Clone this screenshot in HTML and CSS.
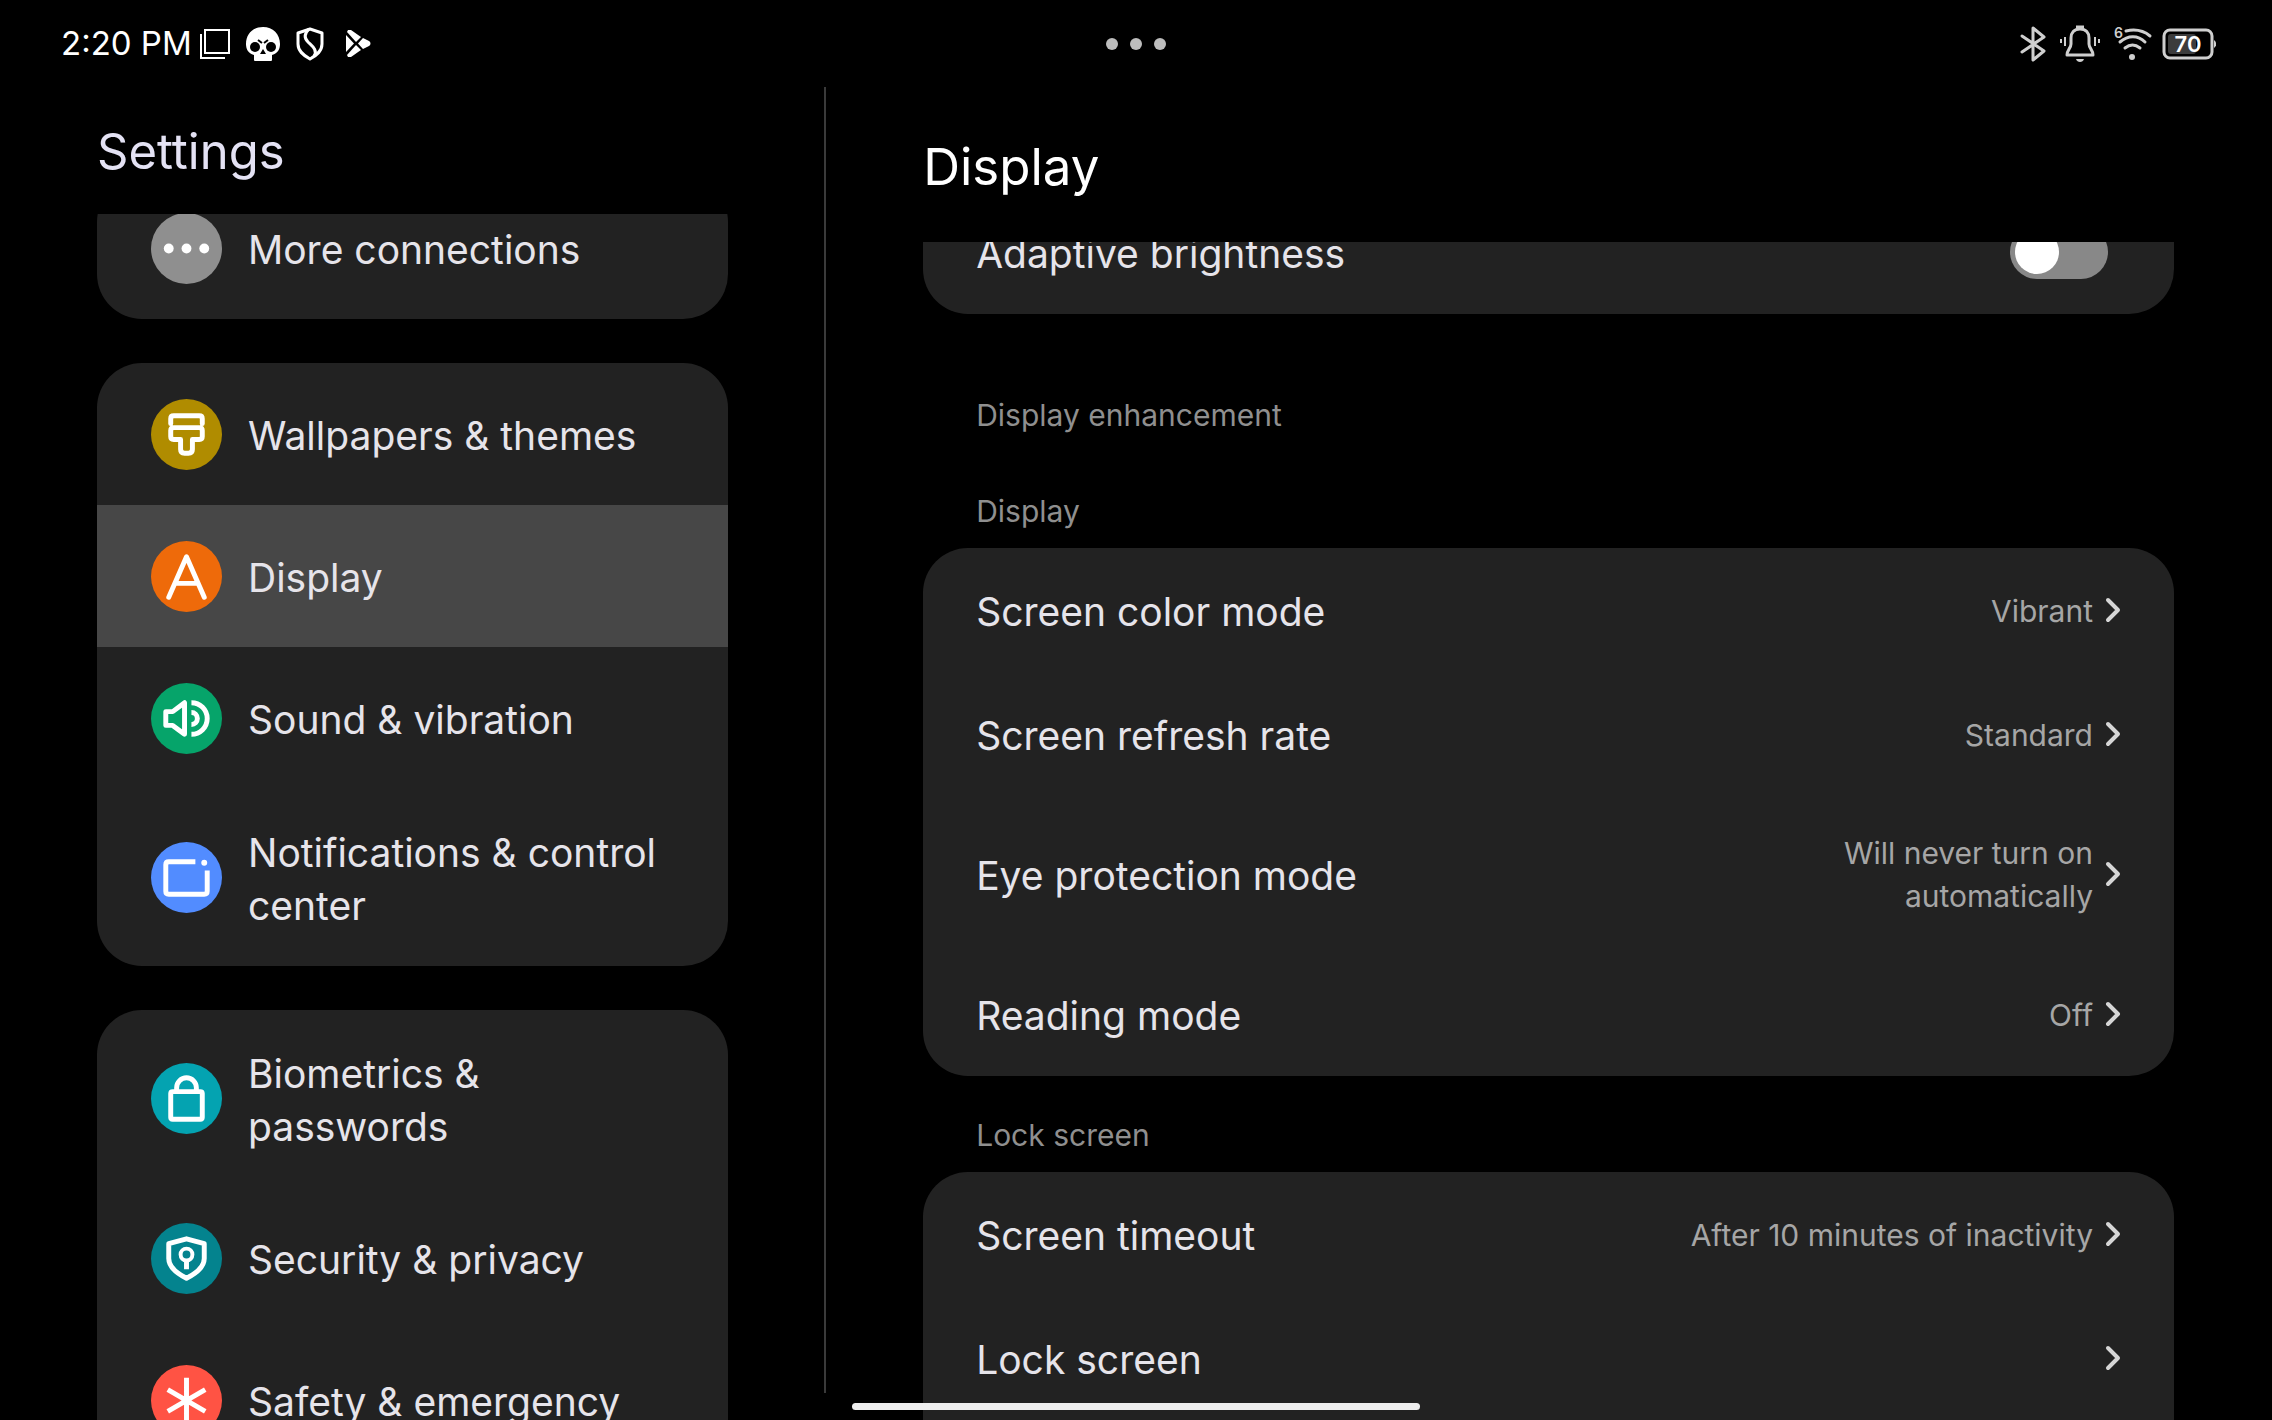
FILE: index.html
```html
<!DOCTYPE html>
<html lang="en">

<head>
    <meta charset="UTF-8">
    <title>Settings</title>
    <link rel="stylesheet" href="styles.css">
</head>

<body>
    <header class="status-bar">
        <div class="status-left">
            <span class="clock">2:20 PM</span>
            <svg class="icon-shot" width="30" height="30" viewBox="0 0 30 30" fill="none" stroke="#fff" stroke-width="2">
                <path d="M5 1h24v23H5z" />
                <path d="M1 5v24h24" />
            </svg>
            <svg class="icon-skull" width="34" height="34" viewBox="0 0 34 34">
                <path fill="#fff" d="M17 0C7 0 0 7 0 17c0 5 2 9 8 11v5q0 1 1 1h16q1 0 1-1v-5c6-2 8-6 8-11C34 7 27 0 17 0z" />
                <circle cx="9" cy="20" r="5" />
                <circle cx="25" cy="20" r="5" />
                <path d="M17 22l3 5h-6z" />
                <path d="M12 13l4 3M22 13l-4 3" stroke="#000" stroke-width="2" />
            </svg>
            <svg class="icon-shield" width="28" height="34" viewBox="0 0 28 34" fill="none" stroke="#fff" stroke-width="3" stroke-linejoin="round">
                <path d="M14 2l12 4v11c0 7-5 11-12 15C7 28 2 24 2 17V6z" />
                <path d="M13 2c-5 5-5 9-1 13s10 8 6 14" />
            </svg>
            <svg class="icon-play" width="25" height="27" viewBox="0 0 25 27" fill="#fff">
                <path d="M0 5l8 8.500L0 22z" />
                <path d="M2 0h3l10 7-5 5L1 2z" />
                <path d="M2 27h3l10-7-5-5L1 25z" />
                <path d="M17 8l6 3c2 1 2 4 0 5l-6 3-5-5.500z" />
            </svg>
        </div>
        <button class="window-menu" aria-label="Window options">
            <svg width="60" height="12" viewBox="0 0 60 12" fill="#bdbdbd">
                <circle cx="6" cy="6" r="6" />
                <circle cx="30" cy="6" r="6" />
                <circle cx="54" cy="6" r="6" />
            </svg>
        </button>
        <div class="status-right">
            <svg width="26" height="36" viewBox="0 0 26 36" fill="none" stroke="#cfcfcf" stroke-width="3" stroke-linecap="round" stroke-linejoin="round">
                <path d="M2 10l22 15-11 9V2l11 9L2 26" />
            </svg>
            <svg width="40" height="38" viewBox="0 0 40 38" fill="none" stroke="#cfcfcf" stroke-width="3" stroke-linejoin="round">
                <path d="M20 4c-6 0-9 4-9 9v6c0 4-4 6-4 11h26c0-5-4-7-4-11v-6c0-5-3-9-9-9z" />
                <path d="M16 2h8" />
                <path d="M1 14v4M5 12v9M39 14v4M35 12v9" stroke-width="2" />
                <path d="M16 34h8c-1 4-7 4-8 0z" fill="#cfcfcf" stroke="none" />
            </svg>
            <svg class="wifi" width="38" height="34" viewBox="0 0 38 34" fill="none" stroke="#cfcfcf" stroke-width="3" stroke-linecap="round">
                <path d="M12 4c9-2 18 0 24 5M6 15c8-7 18-7 25 0M11 21c5-4 10-4 15 0" />
                <circle cx="18" cy="30" r="3" fill="#cfcfcf" stroke="none" />
                <text class="wifi-gen" x="0" y="11">6</text>
            </svg>
            <svg class="battery" width="54" height="32" viewBox="0 0 54 32">
                <rect x="2" y="2" width="48" height="28" rx="6" fill="none" stroke="#cfcfcf" stroke-width="3" />
                <path d="M52 12c3 2 3 6 0 8z" fill="#cfcfcf" />
                <rect x="6" y="6" width="28" height="20" rx="3" fill="#3c3c3c" />
                <text class="battery-level" x="26" y="24">70</text>
            </svg>
        </div>
    </header>

    <div class="panes">
        <aside class="pane pane-menu">
            <h1 class="menu-title">Settings</h1>
            <nav class="scroll-area">
                <div class="menu-list">
                    <div class="card">
                        <a href="#connections" class="menu-item">
                            <svg class="menu-icon" viewBox="0 0 72 72">
                                <circle cx="36" cy="36" r="36" fill="#8f8f8f" />
                                <g fill="#fff">
                                    <circle cx="18" cy="36" r="5" />
                                    <circle cx="36" cy="36" r="5" />
                                    <circle cx="54" cy="36" r="5" />
                                </g>
                            </svg>
                            <span>More connections</span>
                        </a>
                    </div>

                    <div class="card">
                        <a href="#wallpapers" class="menu-item">
                            <svg class="menu-icon" viewBox="0 0 72 72">
                                <circle cx="36" cy="36" r="36" fill="#b08c00" />
                                <path d="M20 25v-5q0-3 3-3h26q3 0 3 3v5M23 29h26q3 0 3 3v6q0 3-3 3h-7v10q0 4-4 4h-4q-4 0-4-4V41h-7q-3 0-3-3v-6q0-3 3-3z" />
                            </svg>
                            <span>Wallpapers &amp; themes</span>
                        </a>
                        <a href="#display" class="menu-item active">
                            <svg class="menu-icon" viewBox="0 0 72 72">
                                <circle cx="36" cy="36" r="36" fill="#ee6a0a" />
                                <path d="M18 57l18-41 18 41M25 43h22" />
                            </svg>
                            <span>Display</span>
                        </a>
                        <a href="#sound" class="menu-item">
                            <svg class="menu-icon" viewBox="0 0 72 72">
                                <circle cx="36" cy="36" r="36" fill="#06a46a" />
                                <path class="butt" d="M15 29h7l12-9v32l-12-9h-7zM41 20a16 16 0 0 1 0 32M41 30a6 6 0 0 1 0 12" />
                            </svg>
                            <span>Sound &amp; vibration</span>
                        </a>
                        <a href="#notifications" class="menu-item">
                            <svg class="menu-icon" viewBox="0 0 72 72">
                                <circle cx="36" cy="36" r="36" fill="#528cff" />
                                <path class="butt" d="M45 20H18q-3 0-3 3v27q0 3 3 3h36q3 0 3-3V29" />
                                <circle cx="54" cy="21" r="3" fill="#fff" />
                            </svg>
                            <span>Notifications &amp; control center</span>
                        </a>
                    </div>

                    <div class="card">
                        <a href="#biometrics" class="menu-item">
                            <svg class="menu-icon" viewBox="0 0 72 72">
                                <circle cx="36" cy="36" r="36" fill="#04a3b1" />
                                <path d="M26 29v-4a10 10 0 0 1 20 0v4M22 29h28q2 0 2 2v24q0 2-2 2H22q-2 0-2-2V31q0-2 2-2z" />
                            </svg>
                            <span>Biometrics &amp; passwords</span>
                        </a>
                        <a href="#security" class="menu-item">
                            <svg class="menu-icon" viewBox="0 0 72 72">
                                <circle cx="36" cy="36" r="36" fill="#04838e" />
                                <path d="M36 16l18 5v15c0 9-8 15-18 20-10-5-18-11-18-20V21z" />
                                <circle cx="36" cy="32" r="6" fill="none" stroke="#fff" stroke-width="4" />
                                <path class="butt" d="M36 38v9" />
                            </svg>
                            <span>Security &amp; privacy</span>
                        </a>
                        <a href="#safety" class="menu-item">
                            <svg class="menu-icon" viewBox="0 0 72 72">
                                <circle cx="36" cy="36" r="36" fill="#ff5344" />
                                <path class="butt" d="M36 13v46M17 25l38 22M55 25L17 47" />
                            </svg>
                            <span>Safety &amp; emergency</span>
                        </a>
                    </div>
                </div>
            </nav>
        </aside>

        <main class="pane pane-detail">
            <h2 class="detail-title">Display</h2>
            <div class="scroll-area">
                <div class="detail-list">
                    <div class="card">
                        <label class="row row-switch" for="adaptive">
                            <span class="label">Adaptive brightness</span>
                            <input type="checkbox" id="adaptive" class="switch">
                        </label>
                    </div>

                    <h3 class="section-title empty">Display enhancement</h3>
                    <h3 class="section-title">Display</h3>
                    <div class="card">
                        <button class="row">
                            <span class="label">Screen color mode</span>
                            <span class="value">Vibrant</span>
                            <svg class="chevron" viewBox="0 0 16 26"><path d="M3 3l10 10L3 23" /></svg>
                        </button>
                        <button class="row">
                            <span class="label">Screen refresh rate</span>
                            <span class="value">Standard</span>
                            <svg class="chevron" viewBox="0 0 16 26"><path d="M3 3l10 10L3 23" /></svg>
                        </button>
                        <button class="row">
                            <span class="label">Eye protection mode</span>
                            <span class="value">Will never turn on automatically</span>
                            <svg class="chevron" viewBox="0 0 16 26"><path d="M3 3l10 10L3 23" /></svg>
                        </button>
                        <button class="row">
                            <span class="label">Reading mode</span>
                            <span class="value">Off</span>
                            <svg class="chevron" viewBox="0 0 16 26"><path d="M3 3l10 10L3 23" /></svg>
                        </button>
                    </div>

                    <h3 class="section-title">Lock screen</h3>
                    <div class="card card-last">
                        <button class="row">
                            <span class="label">Screen timeout</span>
                            <span class="value value-wide">After 10 minutes of inactivity</span>
                            <svg class="chevron" viewBox="0 0 16 26"><path d="M3 3l10 10L3 23" /></svg>
                        </button>
                        <button class="row">
                            <span class="label">Lock screen</span>
                            <span class="value"></span>
                            <svg class="chevron" viewBox="0 0 16 26"><path d="M3 3l10 10L3 23" /></svg>
                        </button>
                    </div>
                </div>
            </div>
        </main>
    </div>

    <div class="home-bar"></div>
</body>

</html>
```
FILE: styles.css
```css
* {
    box-sizing: border-box;
}

body {
    margin: 0;
    height: 100vh;
    display: flex;
    flex-direction: column;
    overflow: hidden;
    background: #000;
    color: #e6e4ea;
    font-family: Inter, "Open Sans", sans-serif;
    font-size: 39px;
    line-height: 53px;
}

h1,
h2,
h3 {
    margin: 0;
    font-weight: 400;
}

/* Status bar */

.status-bar {
    display: grid;
    grid-template-columns: 1fr auto 1fr;
    align-items: center;
    height: 87px;
    padding: 0 56px;
    flex-shrink: 0;
}

.status-left,
.status-right {
    display: flex;
    align-items: center;
}

.status-left {
    gap: 16px;
    padding-left: 5px;
}

.status-right {
    justify-content: flex-end;
    gap: 14px;
}

.clock {
    color: #fff;
    font-size: 33px;
    margin-right: -8px;
}

.icon-play {
    margin-left: 6px;
}

.window-menu {
    display: flex;
    padding: 0;
    border: none;
    background: none;
}

.wifi {
    overflow: visible;
}

.wifi-gen {
    font-size: 14px;
    font-weight: 600;
    fill: #cfcfcf;
    stroke: none;
}

.battery {
    margin-left: -4px;
}

.battery-level {
    font-size: 22px;
    font-weight: 600;
    fill: #fff;
    text-anchor: middle;
}

/* Two panes */

.panes {
    flex: 1;
    min-height: 0;
    display: grid;
    grid-template-columns: 4fr 7fr;
}

.pane {
    display: flex;
    flex-direction: column;
    min-height: 0;
    padding: 0 98px 0 97px;
}

.pane-menu {
    background: linear-gradient(#3a3a3a, #3a3a3a) right top / 2px calc(100% - 27px) no-repeat;
}

.menu-title {
    padding-top: 3px;
    color: #e4e2f4;
    font-size: 49px;
    line-height: 124px;
}

.detail-title {
    padding-top: 5px;
    color: #fff;
    font-size: 51px;
    line-height: 150px;
}

.scroll-area {
    flex: 1;
    min-height: 0;
    overflow: hidden;
}

.card {
    background: #222;
    border-radius: 45px;
    overflow: hidden;
}

.card-last {
    padding-bottom: 48px;
}

/* Left menu, scrolled down by a part of the first row */

.menu-list {
    display: flex;
    flex-direction: column;
    gap: 44px;
    margin-top: -37px;
}

.menu-item {
    display: flex;
    align-items: center;
    gap: 26px;
    min-height: 142px;
    padding: 34px 54px;
    color: inherit;
    text-decoration: none;
}

.menu-item span {
    padding-top: 3px;
}

.menu-item.active {
    background: #474747;
}

.menu-icon {
    width: 71px;
    height: 71px;
    flex-shrink: 0;
}

.menu-icon path {
    fill: none;
    stroke: #fff;
    stroke-width: 5;
    stroke-linecap: round;
    stroke-linejoin: round;
}

.menu-icon .butt {
    stroke-linecap: butt;
}

/* Right pane */

.detail-list {
    margin-top: -52px;
}

.row {
    display: flex;
    align-items: center;
    gap: 12px;
    width: 100%;
    min-height: 124px;
    padding: 34px 53px;
    border: none;
    background: none;
    color: inherit;
    font: inherit;
    text-align: left;
}

.row-switch {
    justify-content: space-between;
    padding-right: 66px;
}

.label {
    padding-top: 3px;
}

.value {
    margin-left: auto;
    max-width: 300px;
    padding-top: 2px;
    color: #a6a6a6;
    font-size: 30px;
    line-height: 43px;
    text-align: right;
}

.value-wide {
    max-width: none;
}

.chevron {
    width: 16px;
    height: 26px;
    flex-shrink: 0;
}

.chevron path {
    fill: none;
    stroke: #d6d6d6;
    stroke-width: 4;
    stroke-linecap: round;
    stroke-linejoin: round;
}

.section-title {
    padding: 38px 53px 15px;
    color: #8f8f8f;
    font-size: 30px;
    line-height: 43px;
}

.section-title.empty {
    margin-top: 42px;
}

.switch {
    appearance: none;
    width: 98px;
    height: 54px;
    margin: 0;
    padding: 5px;
    border-radius: 27px;
    background: #888;
}

.switch::before {
    content: "";
    display: block;
    width: 44px;
    height: 44px;
    border-radius: 50%;
    background: #fff;
}

.switch:checked::before {
    margin-left: auto;
}

.home-bar {
    position: absolute;
    left: 50%;
    bottom: 10px;
    width: 25%;
    height: 7px;
    border-radius: 4px;
    background: #eee;
    transform: translateX(-50%);
}
```
